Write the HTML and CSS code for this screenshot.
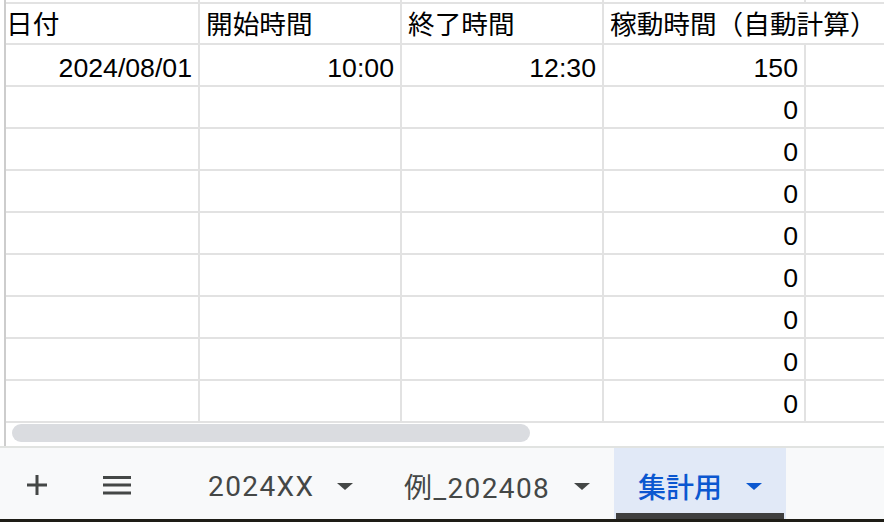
FILE: index.html
```html
<!DOCTYPE html>
<html lang="ja">
<head>
<meta charset="utf-8">
<title>集計用</title>
<link rel="stylesheet" href="styles.css">
</head>
<body>
<div class="app">
  <div class="sheet">
    <div class="grid">
      <div class="ghost"></div><div class="ghost"></div><div class="ghost"></div><div class="ghost"></div><div class="ghost"></div>

      <div class="cell head first">日付</div>
      <div class="cell head">開始時間</div>
      <div class="cell head">終了時間</div>
      <div class="cell head wide">稼動時間（自動計算）</div>

      <div class="cell num">2024/08/01</div><div class="cell num">10:00</div><div class="cell num">12:30</div><div class="cell num">150</div><div class="cell"></div>
      <div class="cell"></div><div class="cell"></div><div class="cell"></div><div class="cell num">0</div><div class="cell"></div>
      <div class="cell"></div><div class="cell"></div><div class="cell"></div><div class="cell num">0</div><div class="cell"></div>
      <div class="cell"></div><div class="cell"></div><div class="cell"></div><div class="cell num">0</div><div class="cell"></div>
      <div class="cell"></div><div class="cell"></div><div class="cell"></div><div class="cell num">0</div><div class="cell"></div>
      <div class="cell"></div><div class="cell"></div><div class="cell"></div><div class="cell num">0</div><div class="cell"></div>
      <div class="cell"></div><div class="cell"></div><div class="cell"></div><div class="cell num">0</div><div class="cell"></div>
      <div class="cell"></div><div class="cell"></div><div class="cell"></div><div class="cell num">0</div><div class="cell"></div>
      <div class="cell"></div><div class="cell"></div><div class="cell"></div><div class="cell num">0</div><div class="cell"></div>
    </div>
  </div>

  <div class="hscroll">
    <div class="track"><div class="thumb"></div></div>
  </div>

  <div class="tabbar">
    <div class="tools">
      <div class="tool">
        <svg class="ico-plus" width="20" height="20" viewBox="0 0 20 20"><path d="M10 0V20M0 10H20" stroke="#444746" stroke-width="3" fill="none"/></svg>
      </div>
      <div class="tool">
        <svg class="ico-menu" width="28" height="19" viewBox="0 0 28 19"><path d="M0 1.5H28M0 9H28M0 17H28" stroke="#444746" stroke-width="3" fill="none"/></svg>
      </div>
    </div>
    <div class="tabs">
      <div class="tab tab-a">
        <span class="label">2024XX</span>
        <svg class="caret" width="16" height="7" viewBox="0 0 16 7"><path d="M0 0H16L8 7Z" fill="#444746"/></svg>
      </div>
      <div class="tab tab-b">
        <span class="label">例_202408</span>
        <svg class="caret" width="16" height="7" viewBox="0 0 16 7"><path d="M0 0H16L8 7Z" fill="#444746"/></svg>
      </div>
      <div class="tab tab-c active">
        <span class="label">集計用</span>
        <svg class="caret" width="16" height="7" viewBox="0 0 16 7"><path d="M0 0H16L8 7Z" fill="#0b57d0"/></svg>
      </div>
    </div>
  </div>
</div>
</body>
</html>
```
FILE: styles.css
```css
html, body {
  margin: 0;
  padding: 0;
}

body {
  background: #1e1d16;
  width: 884px;
  height: 522px;
  overflow: hidden;
}

.app {
  width: 884px;
  height: 519px;
  background: #ffffff;
  display: flex;
  flex-direction: column;
  overflow: hidden;
}

.sheet {
  height: 423px;
  width: 884px;
  overflow: hidden;
  flex: none;
}

.grid {
  display: grid;
  grid-template-columns: 192px 200px 200px 200px 200px;
  grid-template-rows: 2px 39px repeat(9, 40px);
  gap: 2px;
  background: #e2e2e2;
  margin-left: 4px;
  padding-bottom: 2px;
  border-left: 2px solid #cdcdcd;
  width: max-content;
}

.ghost {
  background: #ffffff;
}

.cell {
  background: #ffffff;
  display: flex;
  align-items: flex-end;
  padding: 0 6px 2px 6px;
  font-family: "Liberation Sans", "Noto Sans CJK JP", sans-serif;
  font-size: 26.67px;
  line-height: 30px;
  color: #000000;
  white-space: nowrap;
  overflow: visible;
  min-width: 0;
}

.cell.head {
  padding-bottom: 3px;
}

.cell.head.first {
  padding-left: 0;
}

.cell.wide {
  grid-column: span 2;
}

.cell.num {
  justify-content: flex-end;
}

.hscroll {
  height: 23px;
  padding-left: 4px;
  background: #ffffff;
  flex: none;
}

.track {
  height: 100%;
  border-left: 2px solid #cdcdcd;
  padding: 1px 0 0 6px;
  box-sizing: border-box;
}

.thumb {
  width: 518px;
  height: 18px;
  border-radius: 9px;
  background: #dadce0;
}

.tabbar {
  flex: 1;
  border-top: 2px solid #e1e3e1;
  background: #f8f9fa;
  display: flex;
  align-items: stretch;
}

.tools {
  display: flex;
  gap: 40px;
  padding-left: 17px;
}

.tool {
  width: 40px;
  display: flex;
  align-items: center;
  justify-content: center;
}

.ico-plus {
  margin-top: 3px;
}

.ico-menu {
  margin-top: 4px;
}

.tabs {
  display: flex;
  margin-left: 47px;
}

.tab {
  position: relative;
  display: flex;
  align-items: center;
  padding: 5px 24px 0 24px;
  box-sizing: border-box;
  font-family: "Roboto", "Noto Sans CJK JP", sans-serif;
  font-size: 28px;
  font-weight: 400;
  color: #444746;
  letter-spacing: 1.4px;
  white-space: nowrap;
}

.tab .caret {
  margin-left: auto;
  margin-top: 1px;
}

.tab-a {
  width: 193px;
  margin-right: 3px;
}

.tab-b {
  width: 234px;
}

.tab-c {
  width: 172px;
}

.tab.active {
  background: #e1e9f7;
  color: #0b57d0;
  font-weight: 500;
  letter-spacing: 0;
}

.tab.active::after {
  content: "";
  position: absolute;
  left: 2px;
  right: 2px;
  bottom: 0;
  height: 6px;
  background: #3f3f3f;
}
```
